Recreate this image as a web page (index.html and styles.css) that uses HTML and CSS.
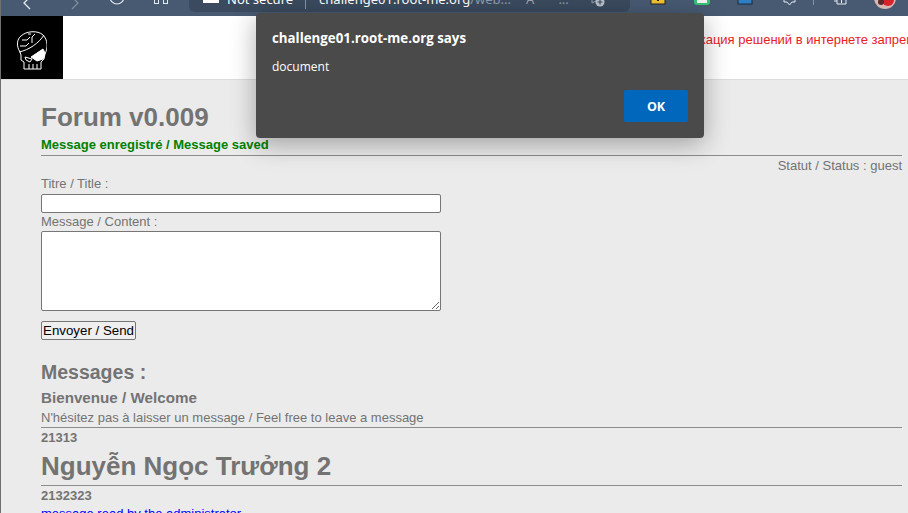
FILE: index.html
```html
<!DOCTYPE html>
<html lang="fr">
<head>
<meta charset="utf-8">
<title>Forum v0.009</title>
<link rel="stylesheet" href="styles.css">
</head>
<body>
<div class="toolbar">
  <div class="tool-left">
    <svg class="icon" width="16" height="16" viewBox="0 0 16 16"><path d="M9 -3 L3 3 L9 9" fill="none" stroke="#e6eaf0" stroke-width="1.3"/></svg>
    <svg class="icon forward" width="16" height="16" viewBox="0 0 16 16"><path d="M5 -3 L11 3 L5 9" fill="none" stroke="#7f8d9f" stroke-width="1.3"/></svg>
    <svg class="icon reload" width="16" height="16" viewBox="0 0 16 16"><circle cx="8" cy="-3" r="7" fill="none" stroke="#e6eaf0" stroke-width="1.2"/></svg>
    <svg class="icon tabs" width="16" height="16" viewBox="0 0 16 16"><rect x="1.500" y="-4" width="4" height="7.500" fill="none" stroke="#e6eaf0" stroke-width="1"/><rect x="10.500" y="-4" width="4" height="7.500" fill="none" stroke="#e6eaf0" stroke-width="1"/></svg>
  </div>
  <div class="addressbar">
    <svg width="18" height="12" viewBox="0 0 18 12"><path d="M1 -2 H17 V3 H1 Z" fill="#fff"/></svg>
    <span class="security">Not secure</span>
    <span class="sep"></span>
    <span class="url">challenge01.root-me.org<span class="path">/web...</span></span>
    <span class="addr-glyph">A</span>
    <span class="addr-stars">...</span>
    <svg class="addr-plus" width="14" height="12" viewBox="0 0 14 12"><path d="M1 -3 L1 3 L5 1" fill="none" stroke="#9aa5b3"/><circle cx="9" cy="2" r="4.500" fill="#b8c0cb"/><path d="M6.500 2 H11.500 M9 -.5 V4.500" stroke="#3a4a5e" stroke-width="1.200"/></svg>
  </div>
  <div class="tool-right">
    <svg class="ti-yellow" width="14" height="12" viewBox="0 0 14 12"><rect x="0" y="-6" width="14" height="10" fill="#f2c22e" stroke="#222" stroke-width="1"/><rect x="6" y="-2" width="2" height="3" fill="#222"/></svg>
    <svg class="ti-green" width="16" height="12" viewBox="0 0 16 12"><rect x="0" y="-6" width="16" height="11" rx="3" fill="#37c172"/><rect x="3" y="-6" width="10" height="9" fill="#eef3ee"/></svg>
    <svg class="ti-blue" width="14" height="12" viewBox="0 0 14 12"><rect x="0" y="-6" width="14" height="10" fill="#2f7fc4" stroke="#1b2a3c"/></svg>
    <svg class="ti-chat" width="13" height="12" viewBox="0 0 13 12"><path d="M1 -2 V2 H4 L6.500 5 L9 2 H12 V-2" fill="none" stroke="#e6eaf0"/></svg>
    <span class="sep ti-sep"></span>
    <svg class="ti-ext" width="16" height="12" viewBox="0 0 16 12"><path d="M5 1 H2 M5 -2 V4 H14 V-2" fill="none" stroke="#e6eaf0"/><path d="M9.500 0 V3" stroke="#e6eaf0"/></svg>
    <svg class="ti-avatar" width="24" height="12" viewBox="0 0 24 12"><circle cx="12" cy="-2" r="11" fill="#d8b8b4"/><circle cx="15" cy="0" r="6" fill="#d9232b"/><circle cx="8" cy="2" r="3" fill="#5a2a2a"/></svg>
  </div>
</div>

<header class="banner">
  <div class="logo">
    <svg width="30" height="39" viewBox="0 0 30 39" fill="none" stroke="#fff" stroke-width="1">
      <path d="M3 21 C-1 15 0 8 4 5 C9 0 21 -1 26 4 C31 9 31 17 28 23 L27 28 L24 31 V38 H7 V31 L4 29 L4 24 Z"/>
      <path d="M2 21 C12 19 22 12 27 4"/>
      <path d="M14 26 L26 18 L28 22 L26 28 L20 30 Z" fill="#fff"/>
      <path d="M8 26 L15 28 L13 31 L9 29 Z"/>
      <path d="M3 15 H9 L12 12 M5 9 H10 L13 6 M15 12 V6 L18 3 M11 3 H14"/>
      <path d="M12 33 V38 M16 33 V38 M20 33 V38"/>
    </svg>
  </div>
  <p class="notice">Публикация решений в интернете запрещена</p>
</header>

<main class="page">
  <h1 class="title">Forum v0.009</h1>
  <p class="saved">Message enregistré / Message saved</p>
  <hr class="rule">
  <p class="status">Statut / Status : guest</p>
  <form class="post-form">
    <label class="field-label" for="title">Titre / Title :</label>
    <input class="field-input" id="title" type="text">
    <label class="field-label" for="content">Message / Content :</label>
    <textarea class="field-area" id="content"></textarea>
    <button class="send" type="button">Envoyer / Send</button>
  </form>
  <h2 class="messages">Messages :</h2>
  <article class="post">
    <h3 class="post-title">Bienvenue / Welcome</h3>
    <p class="post-body">N'hésitez pas à laisser un message / Feel free to leave a message</p>
    <hr class="rule rule-tight">
    <p class="author">21313</p>
  </article>
  <article class="post">
    <h1 class="post-big">Nguyễn Ngọc Trưởng 2</h1>
    <hr class="rule rule-big">
    <p class="author">2132323</p>
    <p class="read">message read by the administrator</p>
  </article>
</main>

<div class="dialog" role="alertdialog">
  <p class="dialog-title">challenge01.root-me.org says</p>
  <p class="dialog-text">document</p>
  <div class="dialog-actions"><button class="ok" type="button">OK</button></div>
</div>
</body>
</html>
```
FILE: styles.css
```css
html, body {
  margin: 0;
  padding: 0;
  height: 513px;
  overflow: hidden;
}
body {
  position: relative;
  background: #ebebeb;
  border-left: 1px solid #6f6f6f;
  box-sizing: border-box;
  font-family: "Liberation Sans", Arial, sans-serif;
  color: #737373;
}
.toolbar {
  height: 16px;
  background: #475a72;
  display: flex;
  align-items: flex-start;
  overflow: hidden;
}
.toolbar svg { display: block; overflow: visible; flex: none; }
.tool-left {
  display: flex;
  width: 188px;
  flex: none;
  padding-left: 20px;
  box-sizing: border-box;
}
.tool-left .icon { height: 16px; }
.forward { margin-left: 30px; }
.reload { margin-left: 26px; }
.tabs { margin-left: 28px; }
.addressbar {
  width: 441px;
  height: 12px;
  flex: none;
  background: #3b4a5e;
  border-radius: 0 0 6px 6px;
  display: flex;
  align-items: flex-start;
  color: #fff;
  font-family: "Noto Sans", "Liberation Sans", sans-serif;
  font-size: 13px;
  line-height: 12px;
  overflow: hidden;
  padding-left: 13px;
  box-sizing: border-box;
}
.security { margin: -7px 0 0 7px; }
.sep {
  width: 1px;
  height: 9px;
  background: #8493a5;
  flex: none;
}
.addressbar .sep { margin-left: 12px; }
.url { margin: -7px 0 0 13px; white-space: nowrap; }
.path { color: #8f9bab; }
.addr-glyph { margin: -7px 0 0 15px; color: #9aa5b3; }
.addr-stars { margin: -7px 0 0 24px; color: #8f9bab; }
.addr-plus { margin-left: 22px; }
.tool-right {
  display: flex;
  align-items: flex-start;
  margin-left: 21px;
}
.ti-green { margin-left: 29px; }
.ti-blue { margin-left: 28px; }
.ti-chat { margin-left: 31px; }
.ti-sep { margin-left: 17px; height: 5px; }
.ti-ext { margin-left: 18px; }
.ti-avatar { margin-left: 25px; }

.banner {
  height: 63px;
  background: #fff;
  border-bottom: 1px solid #dcdcdc;
  display: flex;
  align-items: flex-start;
  overflow: hidden;
  box-sizing: content-box;
}
.logo {
  width: 62px;
  height: 63px;
  padding-top: 6px;
  box-sizing: border-box;
  background: #000;
  display: flex;
  align-items: center;
  justify-content: center;
  flex: none;
}
.notice {
  margin: 16px 0 0 599px;
  color: #e8211f;
  font-size: 13px;
  line-height: 16px;
  white-space: nowrap;
}

.page { padding: 0 6px 0 40px; }
.title {
  margin: 22px 0 0;
  font-size: 26px;
  line-height: 30px;
  font-weight: bold;
}
.saved {
  margin: 5px 0 0;
  font-size: 13px;
  line-height: 15px;
  font-weight: bold;
  color: #008000;
}
.rule {
  margin: 3px 0 0;
  height: 0;
  border: 0;
  border-top: 1px solid #8c8c8c;
}
.rule-tight { margin-top: 2px; }
.rule-big { margin-top: 4px; }
.status {
  margin: 2px 0 0;
  font-size: 13px;
  line-height: 15px;
  text-align: right;
}
.post-form { display: flex; flex-direction: column; align-items: flex-start; }
.field-label { font-size: 13px; line-height: 15px; }
.post-form .field-label:first-child { margin-top: 3px; }
.field-input {
  width: 400px;
  height: 19px;
  margin: 3px 0 0;
  padding: 0;
  box-sizing: border-box;
  border: 1px solid #767676;
  border-radius: 2px;
  background: #fff;
}
.post-form .field-input + .field-label { margin-top: 1px; }
.field-area {
  width: 400px;
  height: 80px;
  margin: 2px 0 0;
  padding: 0;
  box-sizing: border-box;
  border: 1px solid #767676;
  border-radius: 2px;
  background: #fff;
}
.send {
  margin-top: 10px;
  width: 95px;
  height: 19px;
  padding: 0;
  box-sizing: border-box;
  border: 1px solid #767676;
  border-radius: 2px;
  background: #efefef;
  color: #000;
  font-family: "Liberation Sans", Arial, sans-serif;
  font-size: 13.300px;
  line-height: 15px;
  white-space: nowrap;
}
.messages {
  margin: 21px 0 0;
  font-size: 19.500px;
  line-height: 22px;
  font-weight: bold;
}
.post-title {
  margin: 6px 0 0;
  font-size: 15.200px;
  line-height: 17px;
  font-weight: bold;
}
.post-body {
  margin: 4px 0 0;
  font-size: 13px;
  line-height: 15px;
}
.author {
  margin: 2px 0 0;
  font-size: 13px;
  line-height: 15px;
  font-weight: bold;
}
.post-big {
  margin: 6px 0 0;
  font-size: 26px;
  line-height: 30px;
  font-weight: bold;
}
.read {
  margin: 3px 0 0;
  font-size: 13px;
  line-height: 15px;
  color: #0000ff;
}

.dialog {
  position: absolute;
  left: 255px;
  top: 13px;
  width: 448px;
  height: 125px;
  box-sizing: border-box;
  padding: 16px 16px 16px;
  background: #4a4a4a;
  border-radius: 4px;
  box-shadow: 0 6px 26px rgba(0, 0, 0, 0.32);
  font-family: "Open Sans", "Noto Sans", sans-serif;
  color: #fff;
  display: flex;
  flex-direction: column;
}
.dialog-title {
  margin: 0;
  font-size: 13.300px;
  line-height: 18px;
  font-weight: 700;
}
.dialog-text {
  margin: 11px 0 0;
  font-size: 12px;
  line-height: 18px;
}
.dialog-actions {
  margin-top: auto;
  display: flex;
  justify-content: flex-end;
}
.ok {
  width: 64px;
  height: 32px;
  padding: 0;
  border: 0;
  border-radius: 2px;
  background: #0067bd;
  color: #fff;
  font-family: "Open Sans", "Noto Sans", sans-serif;
  font-size: 12.500px;
  font-weight: 700;
}
```
